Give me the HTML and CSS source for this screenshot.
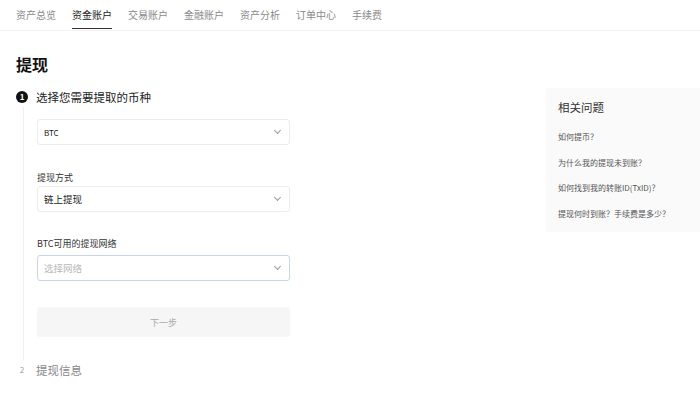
FILE: index.html
```html
<!DOCTYPE html>
<html lang="zh-CN">
<head>
    <meta charset="UTF-8">
    <title>提现</title>
    <link rel="stylesheet" href="styles.css">
</head>
<body>
    <nav class="tabs">
        <a href="#">资产总览</a>
        <a href="#" class="active">资金账户</a>
        <a href="#">交易账户</a>
        <a href="#">金融账户</a>
        <a href="#">资产分析</a>
        <a href="#">订单中心</a>
        <a href="#">手续费</a>
    </nav>
    <div class="page">
        <main class="main">
            <h1>提现</h1>
            <div class="step">
                <div class="step-head">
                    <span class="dot">1</span>
                    <span class="step-title">选择您需要提取的币种</span>
                </div>
                <div class="step-body">
                    <div class="select first">
                        <span class="value small">BTC</span>
                        <span class="chev"></span>
                    </div>
                    <label class="label">提现方式</label>
                    <div class="select">
                        <span class="value">链上提现</span>
                        <span class="chev"></span>
                    </div>
                    <label class="label net">BTC可用的提现网络</label>
                    <div class="select focus">
                        <span class="value placeholder">选择网络</span>
                        <span class="chev"></span>
                    </div>
                    <button class="next">下一步</button>
                </div>
            </div>
            <div class="step-head off">
                <span class="dot">2</span>
                <span class="step-title">提现信息</span>
            </div>
        </main>
        <aside class="faq">
            <h3>相关问题</h3>
            <a href="#">如何提币？</a>
            <a href="#">为什么我的提现未到账？</a>
            <a href="#">如何找到我的转账ID(TxID)？</a>
            <a href="#">提现何时到账？手续费是多少？</a>
        </aside>
    </div>
</body>
</html>
```

FILE: styles.css
```css
body {
    margin: 0;
    font-family: "Noto Sans CJK SC", "Noto Sans", sans-serif;
    color: #121212;
    background: #fff;
}

.tabs {
    display: flex;
    gap: 16px;
    padding: 0 16px;
    height: 30px;
    border-bottom: 1px solid #f2f2f2;
}

.tabs a {
    font-size: 10px;
    line-height: 30px;
    color: #8a8a8a;
    text-decoration: none;
    position: relative;
}

.tabs a.active {
    color: #222;
}

.tabs a.active::after {
    content: "";
    position: absolute;
    left: 0;
    right: 0;
    bottom: 1px;
    height: 1px;
    background: #333;
}

.page {
    display: flex;
    padding-left: 16px;
}

.main {
    width: 274px;
}

h1 {
    font-size: 16px;
    font-weight: 700;
    margin: 22px 0 0;
    line-height: 22px;
}

.step-head {
    display: flex;
    align-items: center;
    height: 20px;
    margin-top: 12px;
}

.dot {
    width: 12px;
    height: 12px;
    border-radius: 50%;
    background: #111;
    color: #fff;
    font-size: 8px;
    font-weight: 700;
    line-height: 12px;
    text-align: center;
    margin-right: 8px;
}

.step-title {
    font-size: 11.5px;
    color: #222;
}

.step-body {
    margin-left: 7px;
    padding: 12px 0 23px 13px;
    border-left: 1px solid #f0f0f0;
}

.select {
    display: flex;
    align-items: center;
    justify-content: space-between;
    height: 24px;
    padding: 0 9px 0 6px;
    border: 1px solid #ececec;
    border-radius: 3px;
}

.select.focus {
    border-color: #c6d6ea;
}

.value {
    font-size: 9.5px;
    color: #222;
}

.value.small {
    font-size: 8px;
}

.value.placeholder {
    color: #b8b8b8;
}

.chev {
    width: 4px;
    height: 4px;
    border-right: 1px solid #999;
    border-bottom: 1px solid #999;
    transform: rotate(45deg);
    margin-top: -3px;
}

.label {
    display: block;
    font-size: 9px;
    color: #333;
    margin: 26px 0 2px;
    line-height: 13px;
}

.label.net {
    margin-top: 25px;
    margin-bottom: 5px;
}

.next {
    display: block;
    width: 100%;
    height: 30px;
    margin-top: 26px;
    border: none;
    border-radius: 3px;
    background: #f6f6f6;
    color: #aaa;
    font-family: inherit;
    font-size: 9px;
}

.step-head.off {
    margin-top: 0;
}

.step-head.off .dot {
    background: #fff;
    color: #999;
    font-weight: 400;
}

.step-head.off .step-title {
    color: #888;
}

.faq {
    margin-left: auto;
    width: 142px;
    margin-top: 57px;
    padding: 11px 0 7px 12px;
    background: #fafafa;
    height: 126px;
}

.faq h3 {
    font-size: 11.5px;
    font-weight: 400;
    color: #333;
    margin: 0 0 16px;
    line-height: 16px;
}

.faq a {
    display: block;
    font-size: 8px;
    color: #555;
    text-decoration: none;
    line-height: 12px;
    margin-bottom: 13.5px;
}
```
